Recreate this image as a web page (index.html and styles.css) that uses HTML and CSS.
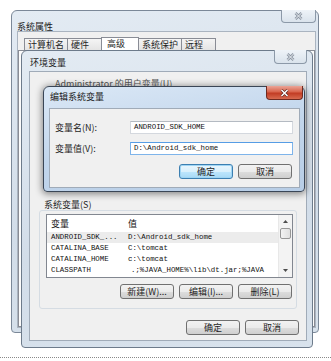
FILE: index.html
```html
<!DOCTYPE html>
<html lang="zh-CN">
<head>
    <meta charset="UTF-8">
    <title>系统属性</title>
    <link rel="stylesheet" href="styles.css">
</head>
<body>
    <div class="desk">

        <!-- 系统属性 (behind) -->
        <div class="win sys">
            <div class="win-title">系统属性</div>
            <div class="close">
                <svg width="9" height="8" viewBox="0 0 9 8"><path d="M1.5 1 L7.5 7 M7.5 1 L1.5 7" stroke="#8b95a2" stroke-width="2.6"/><path d="M1.5 1 L7.5 7 M7.5 1 L1.5 7" stroke="#eef2f6" stroke-width="1"/></svg>
            </div>
            <div class="win-body sys-body">
                <div class="tabs">
                    <div class="tab t1">计算机名</div>
                    <div class="tab t2">硬件</div>
                    <div class="tab t3 active">高级</div>
                    <div class="tab t4">系统保护</div>
                    <div class="tab t5">远程</div>
                </div>
                <div class="tab-panel"></div>
            </div>
        </div>

        <!-- 环境变量 -->
        <div class="win env">
            <div class="win-title">环境变量</div>
            <div class="close">
                <svg width="9" height="8" viewBox="0 0 9 8"><path d="M1.5 1 L7.5 7 M7.5 1 L1.5 7" stroke="#8b95a2" stroke-width="2.6"/><path d="M1.5 1 L7.5 7 M7.5 1 L1.5 7" stroke="#eef2f6" stroke-width="1"/></svg>
            </div>
            <div class="win-body env-body">
                <div class="group-label user-label">Administrator 的用户变量(U)</div>
                <div class="user-group"></div>

                <div class="group-label">系统变量(S)</div>
                <div class="group">
                    <div class="listbox">
                        <div class="list-rows">
                            <div class="list-head">
                                <span class="c1">变量</span>
                                <span class="c2">值</span>
                            </div>
                            <div class="row sel"><span class="c1">ANDROID_SDK_...</span><span class="c2">D:\Android_sdk_home</span></div>
                            <div class="row"><span class="c1">CATALINA_BASE</span><span class="c2">C:\tomcat</span></div>
                            <div class="row"><span class="c1">CATALINA_HOME</span><span class="c2">c:\tomcat</span></div>
                            <div class="row"><span class="c1">CLASSPATH</span><span class="c2 c2b">.;%JAVA_HOME%\lib\dt.jar;%JAVA</span></div>
                        </div>
                        <div class="vscroll">
                            <div class="sb-btn">
                                <svg width="5" height="3" viewBox="0 0 5 3"><path d="M0 3 L2.5 0 L5 3 Z" fill="#4d4d4d"/></svg>
                            </div>
                            <div class="sb-thumb"></div>
                            <div class="sb-track"></div>
                            <div class="sb-btn">
                                <svg width="5" height="3" viewBox="0 0 5 3"><path d="M0 0 L2.5 3 L5 0 Z" fill="#4d4d4d"/></svg>
                            </div>
                        </div>
                    </div>
                    <div class="btn-row">
                        <button class="btn">新建(W)...</button>
                        <button class="btn">编辑(I)...</button>
                        <button class="btn">删除(L)</button>
                    </div>
                </div>

                <div class="btn-row footer">
                    <button class="btn">确定</button>
                    <button class="btn">取消</button>
                </div>
            </div>
        </div>

        <!-- 编辑系统变量 (active) -->
        <div class="win edit">
            <div class="win-title">编辑系统变量</div>
            <div class="close red">
                <svg width="9" height="8" viewBox="0 0 9 8"><path d="M1.5 1 L7.5 7 M7.5 1 L1.5 7" stroke="#5a231b" stroke-width="2.8"/><path d="M1.5 1 L7.5 7 M7.5 1 L1.5 7" stroke="#ffffff" stroke-width="1.5"/></svg>
            </div>
            <div class="win-body edit-body">
                <div class="form">
                    <label class="lbl">变量名(N):</label>
                    <div class="input">ANDROID_SDK_HOME</div>
                    <label class="lbl">变量值(V):</label>
                    <div class="input focus">D:\Android_sdk_home</div>
                </div>
                <div class="btn-row edit-btns">
                    <button class="btn default">确定</button>
                    <button class="btn">取消</button>
                </div>
            </div>
        </div>

    </div>
    <div class="rule"></div>
</body>
</html>
```

FILE: styles.css
```css
body {
    margin: 0;
    width: 331px;
    height: 361px;
    overflow: hidden;
    background: #fff;
    font-family: "Noto Sans CJK SC", sans-serif;
    font-size: 9px;
    color: #1e1e1e;
}

.desk {
    position: relative;
    height: 348px;
}

.rule {
    margin-top: 9px;
    border-top: 1px dotted #8a8a8a;
}

/* windows */
.win {
    position: absolute;
    box-sizing: border-box;
    display: flex;
    flex-direction: column;
    border: 1px solid #7b8898;
    border-radius: 6px 6px 4px 4px;
    background: linear-gradient(170deg, #e3ebf3, #d2dde9 60%, #d8e2ec);
}

.win-title {
    box-sizing: border-box;
    height: 19px;
    padding: 7px 0 0 5px;
    line-height: 10px;
    white-space: nowrap;
    color: #1a1a1a;
}

.win-body {
    box-sizing: border-box;
    flex: 1;
    background: #f0f0f0;
    border: 1px solid #a0abb8;
}

.close {
    position: absolute;
    top: -1px;
    box-sizing: border-box;
    display: flex;
    align-items: center;
    justify-content: center;
    border: 1px solid #8c99a8;
    border-top: none;
    border-radius: 0 0 4px 4px;
    background: linear-gradient(#eef3f8, #dae3ec);
}

.close.red {
    border-color: #6e2a20;
    background: linear-gradient(#eba597, #d8644c 45%, #c23c24 55%, #d76a4f);
}

/* 系统属性 */
.sys {
    left: 11px;
    top: 10px;
    width: 308px;
    height: 323px;
}

.sys .win-title {
    height: 20px;
    padding-top: 11px;
}

.sys .close {
    right: 2px;
    width: 35px;
    height: 13px;
}

.sys-body {
    display: flex;
    flex-direction: column;
    margin: 0 2px 4px 5px;
    border-color: #aab4c0;
}

.tabs {
    display: flex;
    align-items: flex-end;
    padding: 5px 0 0 6px;
}

.tab {
    box-sizing: border-box;
    height: 12px;
    padding-left: 3px;
    line-height: 11px;
    border: 1px solid #898c95;
    border-bottom: none;
    margin-right: -1px;
    background: linear-gradient(#f5f5f5, #e4e4e4);
}

.tab.active {
    height: 13px;
    padding-left: 5px;
    background: #fff;
    position: relative;
    z-index: 1;
}

.t1 { width: 44px; }
.t2 { width: 35px; }
.t3 { width: 38px; }
.t4 { width: 44px; }
.t5 { width: 35px; }

.tab-panel {
    flex: 1;
    border: 1px solid #898c95;
    background: #fcfcfc;
}

/* 环境变量 */
.env {
    left: 21px;
    top: 50px;
    width: 292px;
    height: 298px;
    border-color: #6d7b8b;
}

.env .win-title {
    height: 20px;
    padding: 7px 0 0 8px;
}

.env .close {
    right: 5px;
    width: 33px;
    height: 14px;
}

.env-body {
    display: flex;
    flex-direction: column;
    margin: 0 5px 6px 7px;
    padding: 0 7px 0 9px;
}

.group-label {
    height: 10px;
    line-height: 10px;
    padding-left: 5px;
    white-space: nowrap;
}

.user-label {
    height: 8px;
    line-height: 8px;
    margin-top: 8px;
    padding-left: 16px;
    color: #555;
}

.user-group {
    height: 112px;
}

.group {
    box-sizing: border-box;
    height: 99px;
    margin-right: 2px;
    padding: 3px 3px 0 6px;
    border: 1px solid #d5dce3;
    border-radius: 3px;
}

.listbox {
    box-sizing: border-box;
    height: 64px;
    display: flex;
    border: 1px solid #828790;
    background: #fff;
    overflow: hidden;
}

.list-rows {
    flex: 1;
    font-family: "Liberation Mono", monospace;
    font-size: 7.4px;
    color: #111;
}

.list-head {
    display: flex;
    height: 17px;
    line-height: 17px;
    font-family: "Noto Sans CJK SC", sans-serif;
    font-size: 9px;
}

.row {
    display: flex;
    height: 11px;
    line-height: 11px;
    white-space: nowrap;
}

.row.sel {
    background: #ececec;
}

.c1 {
    width: 76px;
    padding-left: 4px;
    flex: none;
}

.c2 {
    padding-left: 1px;
}

.c2b {
    padding-left: 4px;
}

.vscroll {
    width: 13px;
    display: flex;
    flex-direction: column;
    background: #f3f3f3;
    border-left: 1px solid #e8e8e8;
}

.sb-btn {
    height: 13px;
    display: flex;
    align-items: center;
    justify-content: center;
}

.sb-thumb {
    height: 11px;
    margin: 0 1px;
    box-sizing: border-box;
    border: 1px solid #979797;
    border-radius: 2px;
    background: linear-gradient(90deg, #f3f3f3, #e0e0e0);
}

.sb-track {
    flex: 1;
}

/* buttons */
.btn-row {
    display: flex;
    justify-content: flex-end;
    gap: 5px;
}

.group .btn-row {
    margin-top: 6px;
    margin-right: 1px;
}

.footer {
    margin-top: 11px;
}

.btn {
    box-sizing: border-box;
    width: 54px;
    height: 15px;
    padding: 0;
    border: 1px solid #707070;
    border-radius: 3px;
    background: linear-gradient(#f2f2f2 0%, #ebebeb 50%, #dddddd 51%, #cfcfcf 100%);
    font-family: "Noto Sans CJK SC", sans-serif;
    font-size: 9px;
    line-height: 12px;
    color: #1e1e1e;
    white-space: nowrap;
}

.btn.default {
    border-color: #3c7fb1;
    background: linear-gradient(#eaf6fd 0%, #d9f0fc 50%, #bee6fd 51%, #a7d9f5 100%);
    box-shadow: inset 0 0 0 1px #9fd5f4;
}

/* 编辑系统变量 */
.edit {
    left: 43px;
    top: 86px;
    width: 262px;
    height: 106px;
    border-color: #3a4656;
    background: linear-gradient(170deg, #dbe8f6, #c2d6ec 50%, #b7cde6);
    box-shadow: 0 1px 7px 1px rgba(0, 0, 0, 0.45);
}

.edit .win-title {
    height: 21px;
    padding: 5px 0 0 6px;
}

.edit .close {
    right: 1px;
    width: 37px;
    height: 14px;
}

.edit-body {
    margin: 0 4px 3px 5px;
    padding: 12px 6px 0 5px;
}

.form {
    display: grid;
    grid-template-columns: 75px 163px;
    row-gap: 8px;
    align-items: center;
}

.lbl {
    line-height: 10px;
}

.input {
    box-sizing: border-box;
    height: 13px;
    padding-left: 3px;
    border: 1px solid #d4d8de;
    border-top-color: #b4bac2;
    background: #fff;
    font-family: "Liberation Mono", monospace;
    font-size: 7.4px;
    line-height: 11px;
    color: #111;
}

.input.focus {
    border-color: #7eb4ea;
    border-top-color: #569de5;
}

.edit-btns {
    margin-top: 9px;
    margin-right: 1px;
}
```
